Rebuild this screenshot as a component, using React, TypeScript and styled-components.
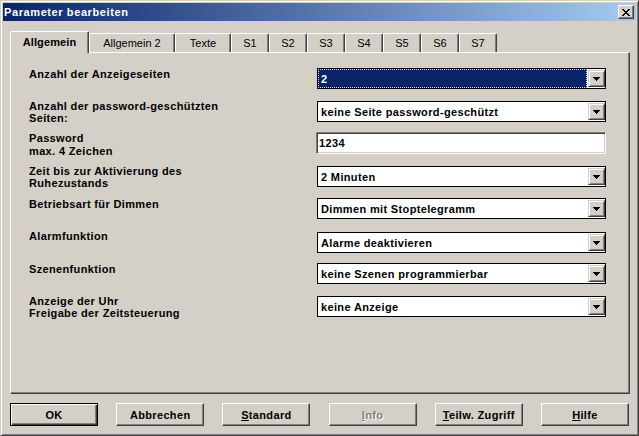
import React from "react";
import styled, { createGlobalStyle, css } from "styled-components";

const C = {
  face: "#d4d0c8",
  hi: "#ffffff",
  sh: "#808080",
  dk: "#404040",
  navy: "#0a246a",
};

const Global = createGlobalStyle`
  html, body { margin: 0; padding: 0; background: ${C.face}; }
  body {
    font-family: "Liberation Sans", Arial, sans-serif;
    font-size: 11px;
    color: #000;
  }
  * { box-sizing: border-box; }
`;

const Window = styled.div`
  width: 639px;
  height: 436px;
  background: ${C.face};
  border: 1px solid;
  border-color: ${C.face} ${C.dk} ${C.dk} ${C.face};
  box-shadow: inset 1px 1px ${C.hi}, inset -1px -1px ${C.sh};
  padding: 2px;
  display: flex;
  flex-direction: column;
`;

const TitleBar = styled.div`
  height: 18px;
  flex: none;
  display: flex;
  align-items: center;
  justify-content: space-between;
  padding-left: 1px;
  background: linear-gradient(to right, #0a246a, #a6caf0);
  color: #fff;
  font-weight: bold;
  font-size: 11px;
  letter-spacing: 0.6px;
`;

const CloseBtn = styled.div`
  width: 16px;
  height: 14px;
  margin-right: 2px;
  background: ${C.face};
  border: 1px solid;
  border-color: ${C.hi} ${C.dk} ${C.dk} ${C.hi};
  box-shadow: inset -1px -1px ${C.sh};
  display: flex;
  align-items: center;
  justify-content: center;
  padding-right: 1px;
`;

const Body = styled.div`
  flex: 1;
  display: flex;
  flex-direction: column;
  padding: 10px 6px 0 7px;
`;

const TabStrip = styled.div`
  display: flex;
  align-items: flex-end;
  height: 22px;
  margin-bottom: -1px;
  position: relative;
  z-index: 1;
`;

const Tab = styled.div<{ $w: number; $active?: boolean }>`
  width: ${(p) => p.$w}px;
  background: ${C.face};
  border-left: 1px solid ${C.hi};
  border-top: 1px solid ${C.hi};
  border-right: 1px solid ${C.dk};
  border-radius: 2px 2px 0 0;
  box-shadow: inset -1px 0 ${C.sh};
  text-align: center;
  line-height: 12px;
  white-space: nowrap;
  ${(p) =>
    p.$active
      ? css`
          height: 22px;
          padding-top: 4px;
          font-weight: bold;
          letter-spacing: 0.1px;
        `
      : css`
          height: 19px;
          margin-bottom: 1px;
          padding-top: 3px;
        `}
`;

const Panel = styled.div`
  width: 620px;
  height: 342px;
  flex: none;
  border-left: 1px solid ${C.hi};
  border-top: 1px solid ${C.hi};
  border-right: 1px solid ${C.dk};
  border-bottom: 1px solid ${C.dk};
  box-shadow: inset -1px -1px ${C.sh};
  padding: 15px 0 0 18px;
  display: flex;
  flex-direction: column;
`;

const Row = styled.div<{ $h: number }>`
  display: flex;
  align-items: flex-start;
  height: ${(p) => p.$h}px;
  flex: none;
`;

const Label = styled.div<{ $lh: number; $dy: number }>`
  width: 288px;
  flex: none;
  font-weight: bold;
  letter-spacing: 0.35px;
  line-height: ${(p) => p.$lh}px;
  margin-top: ${(p) => p.$dy}px;
  white-space: nowrap;
`;

const Combo = styled.div`
  width: 289px;
  height: 21px;
  border: 1px solid #000;
  background: #fff;
  display: flex;
  align-items: center;
`;

const ComboText = styled.div<{ $focused?: boolean }>`
  flex: 1;
  height: 100%;
  display: flex;
  align-items: center;
  font-weight: bold;
  letter-spacing: 0.35px;
  white-space: nowrap;
  ${(p) =>
    p.$focused
      ? css`
          background: ${C.navy};
          color: #fff;
          border: 1px dotted #f5db95;
          margin-right: 1px;
          padding-left: 2px;
        `
      : css`
          padding-left: 3px;
        `}
`;

const DropBtn = styled.div`
  width: 17px;
  height: 17px;
  flex: none;
  background: ${C.face};
  border: 1px solid;
  border-color: ${C.face} ${C.dk} ${C.dk} ${C.face};
  box-shadow: inset 1px 1px ${C.hi}, inset -1px -1px ${C.sh};
  display: flex;
  align-items: center;
  justify-content: center;
  padding-top: 1px;
`;

const Edit = styled.div`
  width: 290px;
  height: 22px;
  margin-left: -1px;
  background: #fff;
  border: 1px solid;
  border-color: ${C.sh} ${C.hi} ${C.hi} ${C.sh};
  box-shadow: inset 1px 1px ${C.dk}, inset -1px -1px ${C.face};
  padding-left: 2px;
  display: flex;
  align-items: center;
  font-weight: bold;
  letter-spacing: 0.35px;
`;

const ButtonRow = styled.div`
  display: flex;
  justify-content: space-between;
  width: 619px;
  margin-top: 9px;
`;

const Button = styled.div<{ $default?: boolean; $disabled?: boolean }>`
  width: 88px;
  height: 23px;
  background: ${C.face};
  display: flex;
  align-items: center;
  justify-content: center;
  font-weight: bold;
  letter-spacing: 0.35px;
  ${(p) =>
    p.$default
      ? css`
          border: 1px solid #000;
          box-shadow: inset 1px 1px ${C.hi}, inset -1px -1px ${C.dk},
            inset -2px -2px ${C.sh};
        `
      : css`
          border: 1px solid;
          border-color: ${C.hi} ${C.dk} ${C.dk} ${C.hi};
          box-shadow: inset -1px -1px ${C.sh};
        `}
  ${(p) =>
    p.$disabled &&
    css`
      color: ${C.sh};
      text-shadow: 1px 1px 0 ${C.hi};
    `}
  u { text-underline-offset: 1px; }
`;

const CloseGlyph = () => (
  <svg width="8" height="7" viewBox="0 0 8 7" shapeRendering="crispEdges">
    <path
      fill="#000"
      d="M0 0h2v1H0z M6 0h2v1H6z M1 1h2v1H1z M5 1h2v1H5z M2 2h4v1H2z M3 3h2v1H3z M2 4h4v1H2z M1 5h2v1H1z M5 5h2v1H5z M0 6h2v1H0z M6 6h2v1H6z"
    />
  </svg>
);

const ArrowGlyph = () => (
  <svg width="7" height="4" viewBox="0 0 7 4" shapeRendering="crispEdges">
    <path fill="#000" d="M0 0h7v1H0z M1 1h5v1H1z M2 2h3v1H2z M3 3h1v1H3z" />
  </svg>
);

const tabs = [
  { label: "Allgemein", w: 79, active: true },
  { label: "Allgemein 2", w: 86 },
  { label: "Texte", w: 56 },
  { label: "S1", w: 38 },
  { label: "S2", w: 38 },
  { label: "S3", w: 38 },
  { label: "S4", w: 38 },
  { label: "S5", w: 38 },
  { label: "S6", w: 38 },
  { label: "S7", w: 38 },
];

type Param = {
  label: string[];
  value: string;
  kind?: "combo" | "edit";
  focused?: boolean;
  h: number;
  lh?: number;
  dy?: number;
};

const params: Param[] = [
  { label: ["Anzahl der Anzeigeseiten"], value: "2", focused: true, h: 33, dy: 0 },
  { label: ["Anzahl der password-geschützten", "Seiten:"], value: "keine Seite password-geschützt", h: 31, dy: -1 },
  { label: ["Password", "max. 4 Zeichen"], value: "1234", kind: "edit", h: 34, lh: 13, dy: 0 },
  { label: ["Zeit bis zur Aktivierung des", "Ruhezustands"], value: "2 Minuten", h: 32, dy: -1 },
  { label: ["Betriebsart für Dimmen"], value: "Dimmen mit Stoptelegramm", h: 34, dy: 0 },
  { label: ["Alarmfunktion"], value: "Alarme deaktivieren", h: 31, dy: -2 },
  { label: ["Szenenfunktion"], value: "keine Szenen programmierbar", h: 33, dy: 0 },
  { label: ["Anzeige der Uhr", "Freigabe der Zeitsteuerung"], value: "keine Anzeige", h: 33, dy: -1 },
];

export default function App() {
  return (
    <>
      <Global />
      <Window>
        <TitleBar>
          <span>Parameter bearbeiten</span>
          <CloseBtn>
            <CloseGlyph />
          </CloseBtn>
        </TitleBar>
        <Body>
          <TabStrip>
            {tabs.map((t) => (
              <Tab key={t.label} $w={t.w} $active={t.active}>
                {t.label}
              </Tab>
            ))}
          </TabStrip>
          <Panel>
            {params.map((p, i) => (
              <Row key={i} $h={p.h}>
                <Label $lh={p.lh ?? 12} $dy={p.dy ?? 0}>
                  {p.label.map((l, j) => (
                    <div key={j}>{l}</div>
                  ))}
                </Label>
                {p.kind === "edit" ? (
                  <Edit>{p.value}</Edit>
                ) : (
                  <Combo>
                    <ComboText $focused={p.focused}>{p.value}</ComboText>
                    <DropBtn>
                      <ArrowGlyph />
                    </DropBtn>
                  </Combo>
                )}
              </Row>
            ))}
          </Panel>
          <ButtonRow>
            <Button $default>OK</Button>
            <Button>Abbrechen</Button>
            <Button>
              <span><u>S</u>tandard</span>
            </Button>
            <Button $disabled>
              <span><u>I</u>nfo</span>
            </Button>
            <Button>
              <span><u>T</u>eilw. Zugriff</span>
            </Button>
            <Button>
              <span><u>H</u>ilfe</span>
            </Button>
          </ButtonRow>
        </Body>
      </Window>
    </>
  );
}
